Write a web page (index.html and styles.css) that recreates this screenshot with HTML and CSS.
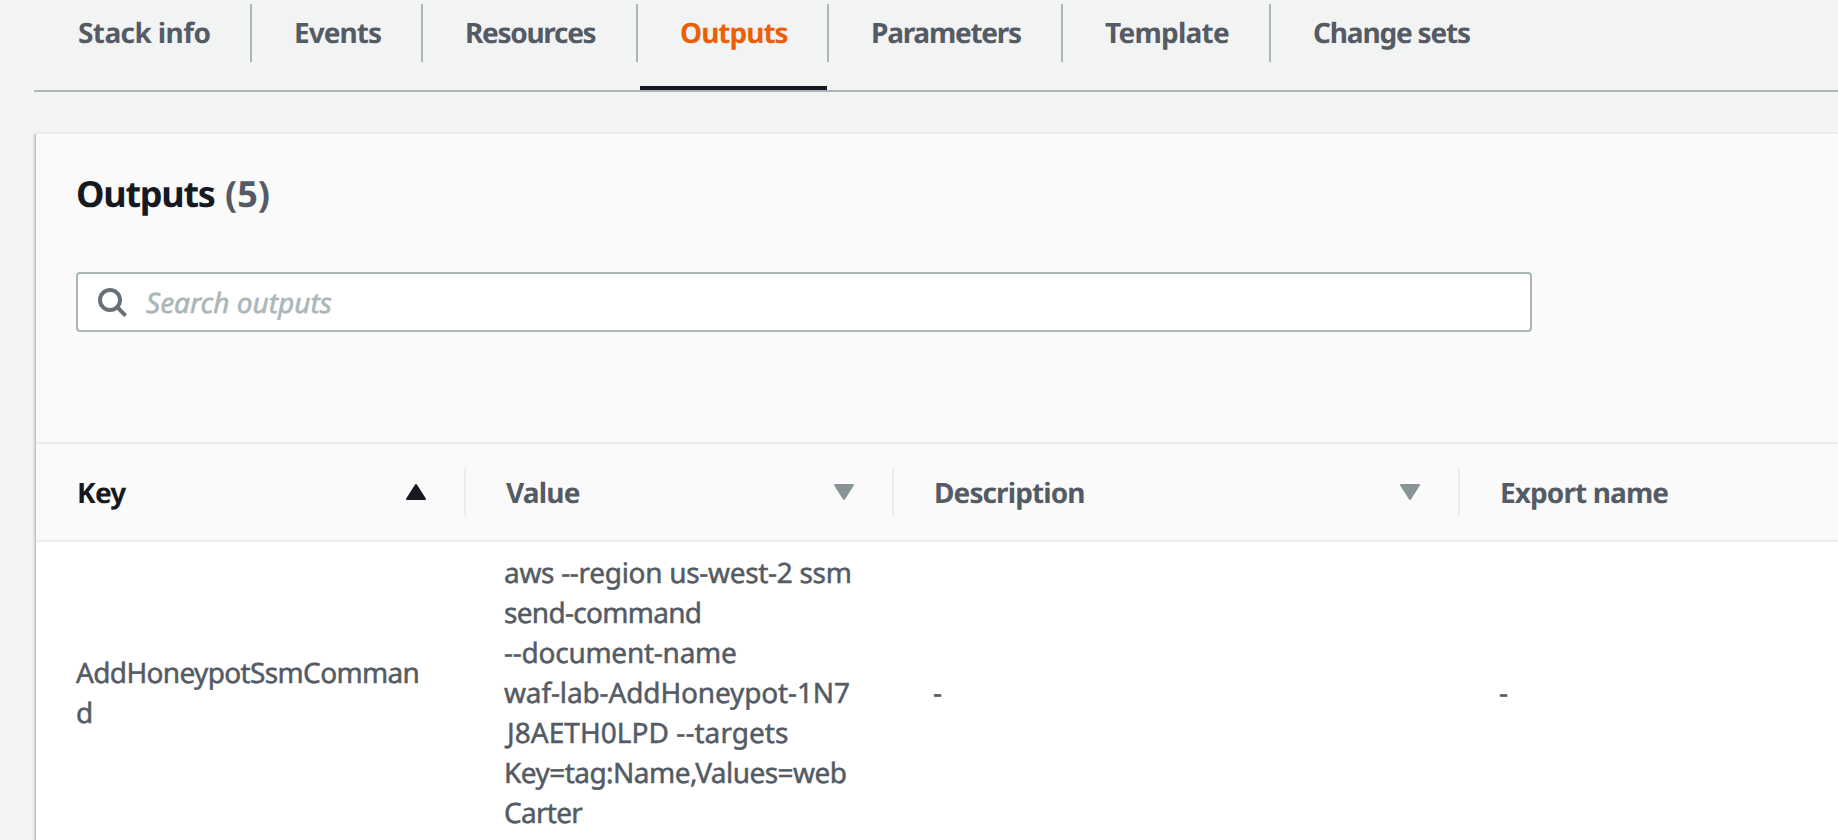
FILE: index.html
```html
<!DOCTYPE html>
<html lang="en">
<head>
<meta charset="utf-8">
<title>Stack outputs</title>
<link rel="stylesheet" href="styles.css">
</head>
<body>
<nav class="tabs">
  <a class="tab tab-info"><span class="tab-label">Stack info</span></a>
  <a class="tab tab-events"><span class="tab-label">Events</span></a>
  <a class="tab tab-resources"><span class="tab-label">Resources</span></a>
  <a class="tab tab-outputs active"><span class="tab-label">Outputs</span></a>
  <a class="tab tab-parameters"><span class="tab-label">Parameters</span></a>
  <a class="tab tab-template"><span class="tab-label">Template</span></a>
  <a class="tab tab-changes"><span class="tab-label">Change sets</span></a>
</nav>
<main class="card">
  <header class="card-header">
    <h2 class="title"><span class="title-text">Outputs</span> <span class="count">(5)</span></h2>
    <div class="search">
      <svg class="search-icon" width="32" height="32" viewBox="0 0 32 32">
        <circle cx="14" cy="14" r="10" fill="none" stroke="#687078" stroke-width="4"/>
        <path d="M21 21L29.6 29.6" stroke="#687078" stroke-width="4"/>
      </svg>
      <span class="placeholder">Search outputs</span>
    </div>
  </header>
  <div class="grid head">
    <div class="th sorted"><span class="key-label">Key</span>
      <svg class="caret" width="20" height="16" viewBox="0 0 20 16"><path d="M10 1L19 15H1Z" fill="#16191f" stroke="#16191f" stroke-width="2" stroke-linejoin="round"/></svg>
    </div>
    <div class="th"><span class="value-label">Value</span>
      <svg class="caret" width="20" height="16" viewBox="0 0 20 16"><path d="M10 15L1 1H19Z" fill="#879596" stroke="#879596" stroke-width="2" stroke-linejoin="round"/></svg>
    </div>
    <div class="th"><span class="description-label">Description</span>
      <svg class="caret" width="20" height="16" viewBox="0 0 20 16"><path d="M10 15L1 1H19Z" fill="#879596" stroke="#879596" stroke-width="2" stroke-linejoin="round"/></svg>
    </div>
    <div class="th last"><span class="export-label">Export name</span></div>
  </div>
  <div class="grid row">
    <div class="td key-cell">AddHoneypotSsmComman<br>d</div>
    <div class="td value-cell">
      <span class="line line-region">aws --region us-west-2 ssm</span>
      <span class="line line-send">send-command</span>
      <span class="line line-document">--document-name</span>
      <span class="line line-waf">waf-lab-AddHoneypot-1N7</span>
      <span class="line line-targets">J8AETH0LPD --targets</span>
      <span class="line line-tag">Key=tag:Name,Values=web</span>
      <span class="line line-carter">Carter</span>
    </div>
    <div class="td dash-cell">-</div>
    <div class="td dash-cell">-</div>
  </div>
</main>
</body>
</html>
```
FILE: styles.css
```css
* { box-sizing: border-box; }

body {
  margin: 0;
  height: 840px;
  overflow: hidden;
  background: #f2f3f3;
  color: #545b64;
  font: 28px/40px "Noto Sans", "Open Sans", sans-serif;
  text-rendering: geometricPrecision;
  white-space: nowrap;
}

/* Tab bar */
.tabs {
  display: flex;
  height: 92px;
  margin-left: 34px;
  padding-top: 4px;
  border-bottom: 2px solid #aab7b8;
  font-weight: 700;
}

.tab {
  display: flex;
  flex-direction: column;
  justify-content: space-between;
}

.tab-label {
  height: 58px;
  padding: 9px 0 0 42px;
  border-right: 2px solid #aab7b8;
}

.tab-info { width: 218px; letter-spacing: -0.6px; }
.tab-info .tab-label { padding-left: 44px; }
.tab-events { width: 171px; letter-spacing: -0.95px; }
.tab-resources { width: 215px; letter-spacing: -1.3px; }
.tab-outputs { width: 191px; letter-spacing: -1px; }
.tab-parameters { width: 234px; letter-spacing: -1.25px; }
.tab-template { width: 208px; letter-spacing: -0.74px; }
.tab-changes { width: 220px; letter-spacing: -1.18px; }
.tab-changes .tab-label { border-right: 0; }

.active { color: #eb5f07; }
.active::after {
  content: "";
  height: 4px;
  margin: 0 2px;
  background: #16191f;
}

/* Outputs panel */
.card {
  height: 708px;
  margin: 40px 0 0 36px;
  border-top: 2px solid #eaeded;
  background: #fff;
  box-shadow: 0 2px 2px rgba(0, 28, 36, .3), -2px 2px 2px rgba(0, 28, 36, .15);
}

.card-header {
  height: 308px;
  padding: 35px 40px 0;
  background: #fafafa;
}

.title {
  height: 50px;
  margin: 0 0 53px;
  color: #16191f;
  font-size: 36px;
  line-height: 50px;
}

.title-text { margin-right: 1px; letter-spacing: -1.25px; }
.count { color: #545b64; }

.search {
  display: flex;
  align-items: center;
  width: 1456px;
  height: 60px;
  padding-left: 18px;
  border: 2px solid #aab7b8;
  border-radius: 4px;
  background: #fff;
}

.placeholder {
  padding-top: 2px;
  margin-left: 18px;
  color: #aab7b8;
  font-style: italic;
  -webkit-text-stroke: 0.6px #aab7b8;
}

/* Table */
.grid {
  display: grid;
  grid-template-columns: 430px 428px 566px 1fr;
}

.head {
  height: 100px;
  padding: 24px 0;
  border: solid #eaeded;
  border-width: 2px 0;
  background: #fafafa;
  font-weight: 700;
}

.th {
  display: flex;
  align-items: center;
  justify-content: space-between;
  height: 48px;
  padding: 0 38px 0 40px;
  border-right: 2px solid #eaeded;
}

.th > span { padding-top: 2px; }

.sorted { padding-left: 41px; color: #16191f; }
.last { border-right: 0; }
.key-label { letter-spacing: -0.7px; }
.value-label { letter-spacing: -0.8px; }
.description-label { letter-spacing: -0.9px; }
.export-label { letter-spacing: -0.9px; }

.row {
  height: 298px;
  align-items: center;
  padding-top: 4px;
  overflow: hidden;
  -webkit-text-stroke: 0.5px #545b64;
}

.td { padding-left: 39px; }
.key-cell { padding-left: 40px; letter-spacing: -0.64px; }
.value-cell { padding-left: 38px; }
.line { display: block; }
.line-region { letter-spacing: -0.31px; }
.line-send { letter-spacing: -0.7px; }
.line-document { letter-spacing: -0.25px; }
.line-waf { letter-spacing: -0.134px; }
.line-targets { padding-left: 3px; letter-spacing: 0.05px; }
.line-tag { letter-spacing: -0.54px; }
.line-carter { letter-spacing: -0.7px; }
```
